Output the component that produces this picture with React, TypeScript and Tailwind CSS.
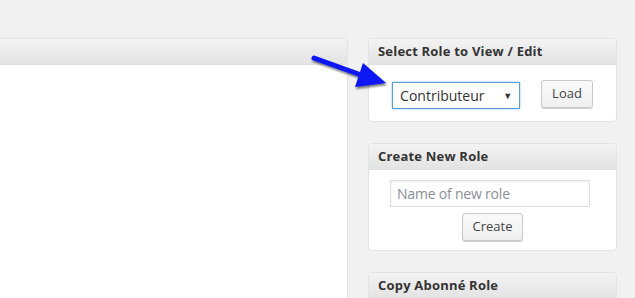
import React from 'react';

const Panel: React.FC<{ title: string; children?: React.ReactNode }> = ({ title, children }) => (
  <div className="bg-white border border-[#e3e3e3] rounded-[4px] overflow-hidden">
    <div className="h-[26px] px-[9px] flex items-center bg-gradient-to-b from-[#f3f3f3] to-[#e3e3e3] border-b border-[#e0e0e0]">
      <h3 className="text-[13px] font-bold text-[#333] tracking-[0.2px]">{title}</h3>
    </div>
    {children}
  </div>
);

const Btn: React.FC<{ label: string }> = ({ label }) => (
  <button className="h-[28px] px-[10px] bg-gradient-to-b from-[#fafafa] to-[#efefef] border border-[#c9c9c9] rounded-[3px] shadow-[0_1px_0_#cfcfcf] text-[13px] text-[#444]">
    {label}
  </button>
);

export default function App() {
  return (
    <div className="relative w-[635px] h-[298px] overflow-hidden bg-[#f1f1f1] font-['Open_Sans','Liberation_Sans',sans-serif]">
      <div className="flex items-start gap-[20px] pt-[38px]">
        <div className="w-[348px] h-[280px] bg-white border border-l-0 border-[#e3e3e3] rounded-r-[4px] overflow-hidden shrink-0">
          <div className="h-[26px] bg-gradient-to-b from-[#f3f3f3] to-[#e3e3e3] border-b border-[#e0e0e0]" />
        </div>

        <div className="w-[249px] flex flex-col gap-[21px] shrink-0">
          <Panel title="Select Role to View / Edit">
            <div className="flex justify-center items-start gap-[21px] pt-[15px] pb-[12px]">
              <div className="w-[128px] h-[27px] mt-[2px] border border-[#5b9dd9] shadow-[0_0_2px_rgba(30,140,190,0.5)] flex items-center justify-between px-[7px] text-[14px] text-[#333]">
                <span>Contributeur</span>
                <span className="text-[9px] text-[#333]">▼</span>
              </div>
              <Btn label="Load" />
            </div>
          </Panel>

          <Panel title="Create New Role">
            <div className="flex flex-col items-center gap-[6px] pt-[10px] pb-[9px]">
              <div className="w-[200px] h-[27px] mr-[5px] border border-[#dddddd] shadow-[inset_0_1px_2px_rgba(0,0,0,0.07)] flex items-center px-[6px] text-[14px] tracking-[-0.2px] text-[#8a8f96]">
                Name of new role
              </div>
              <Btn label="Create" />
            </div>
          </Panel>

          <Panel title="Copy Abonné Role">
            <div className="h-[60px]" />
          </Panel>
        </div>
      </div>

      <svg className="absolute left-0 top-0 pointer-events-none" width="635" height="298" viewBox="0 0 635 298">
        <defs>
          <filter id="sh" x="-20%" y="-20%" width="140%" height="140%">
            <feDropShadow dx="1" dy="2" stdDeviation="1.2" floodColor="#000" floodOpacity="0.55" />
          </filter>
        </defs>
        <g filter="url(#sh)" fill="#0a14f5" stroke="none">
          <line x1="314" y1="58" x2="364" y2="76" stroke="#0a14f5" strokeWidth="5" strokeLinecap="round" />
          <polygon points="363,63 386,83 355,87" />
        </g>
      </svg>
    </div>
  );
}
